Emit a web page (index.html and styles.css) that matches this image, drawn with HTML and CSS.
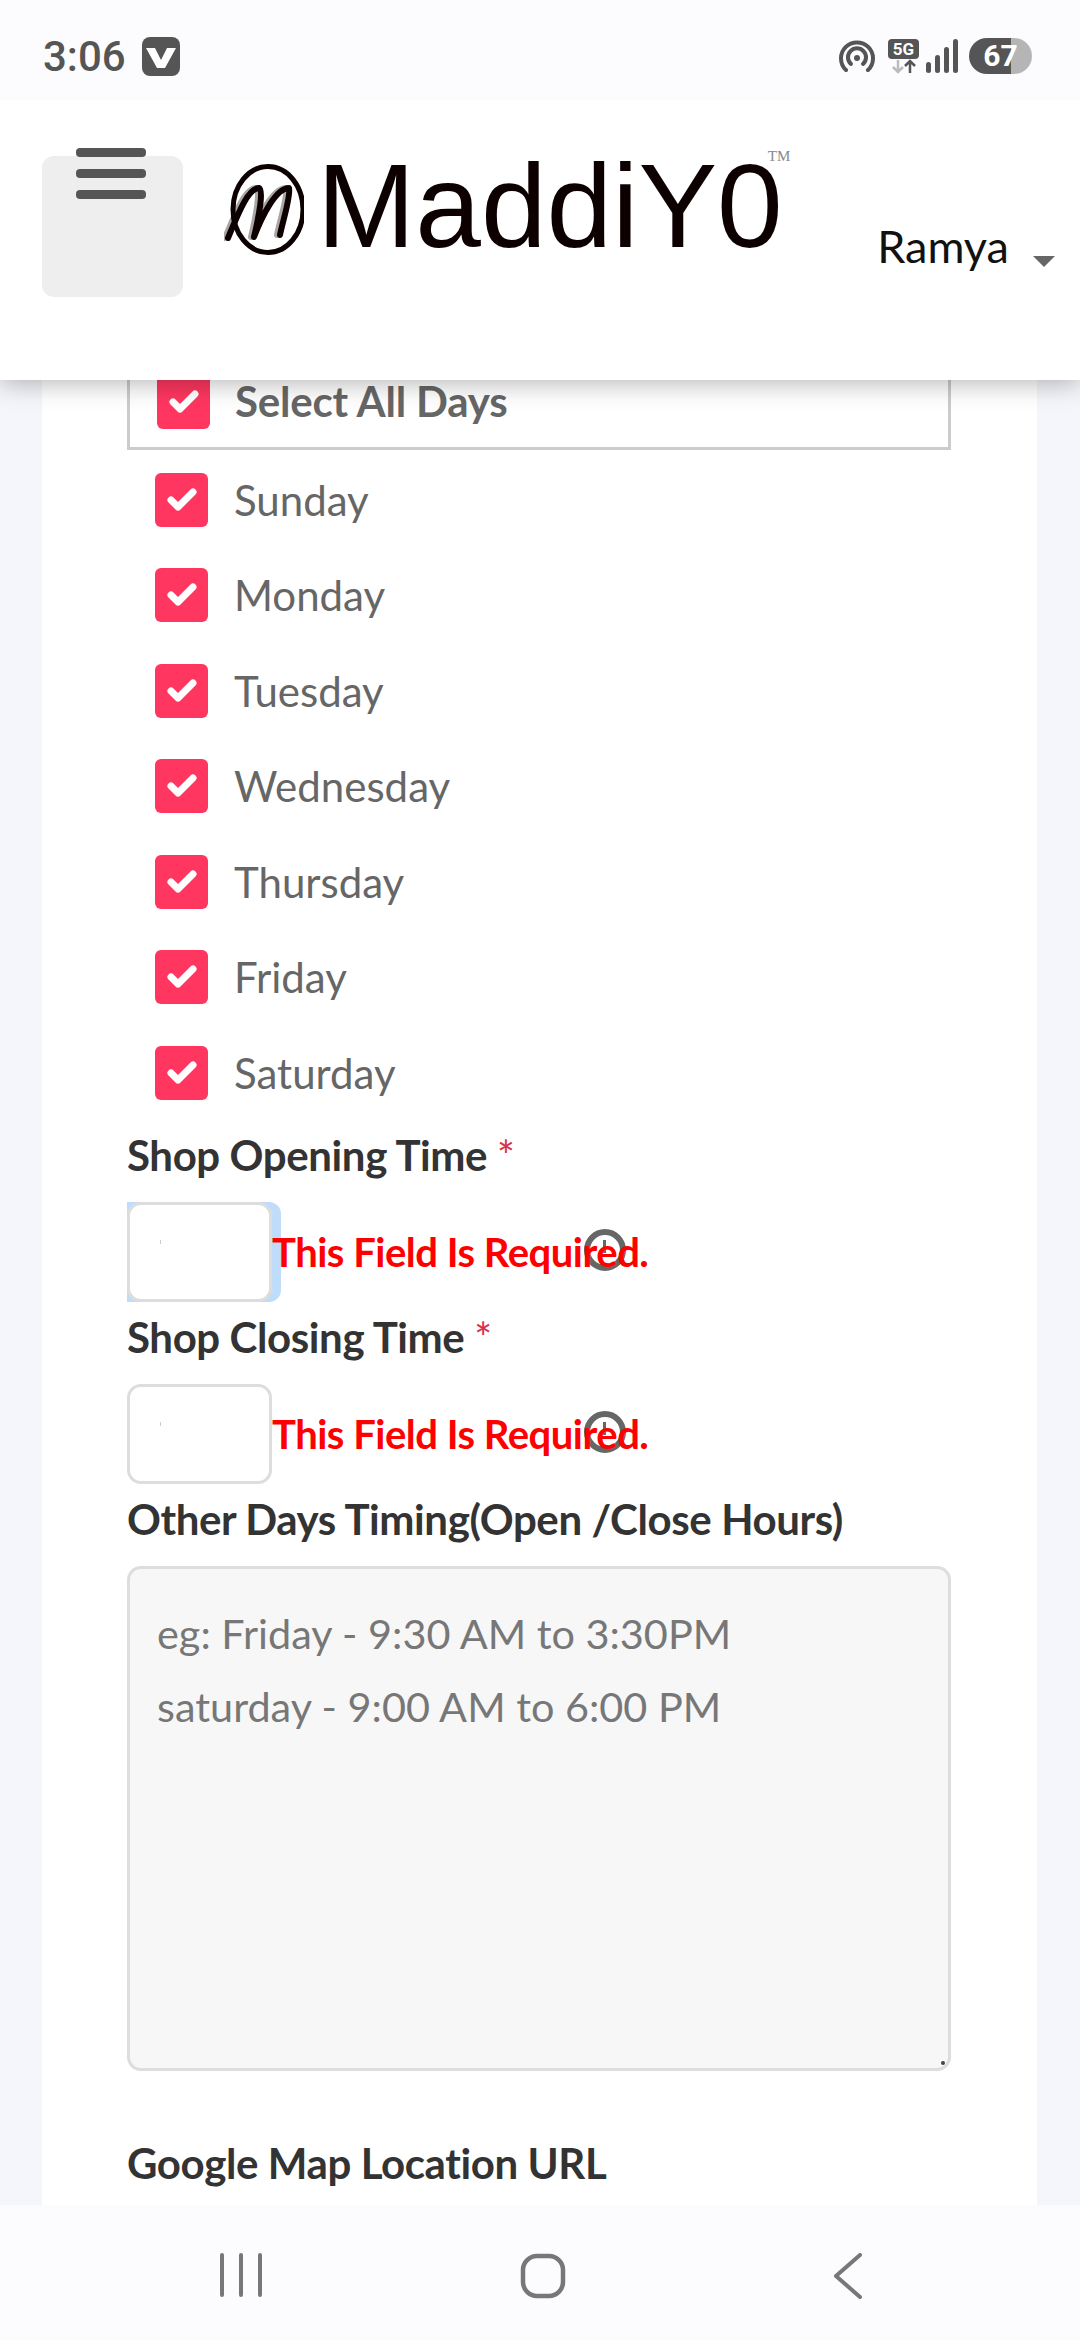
FILE: index.html
```html
<!DOCTYPE html>
<html lang="en">
<head>
    <meta charset="UTF-8">
    <meta name="viewport" content="width=device-width, initial-scale=1.0">
    <title>MaddiY0</title>
    <link rel="stylesheet" href="styles.css">
</head>
<body>
    <svg class="defs" width="0" height="0">
        <symbol id="tick" viewBox="0 0 30 24">
            <path d="M4 12l7 7L26 4" fill="none" stroke="#fff" stroke-width="7" stroke-linecap="round" stroke-linejoin="round"/>
        </symbol>
    </svg>

    <div class="status-bar">
        <div class="status-left">
            <span class="clock">3:06</span>
            <svg class="app-icon" width="38" height="39" viewBox="0 0 38 39">
                <rect width="38" height="39" rx="8" fill="#555"/>
                <path d="M4 11h9l6 12 6-12h9l-11 20h-8z" fill="#fff"/>
            </svg>
        </div>
        <div class="status-right">
            <svg width="36" height="32" viewBox="0 0 36 32">
                <path d="M7 30a16 16 0 1 1 22 0" fill="none" stroke="#555" stroke-width="4" stroke-linecap="round"/>
                <path d="M12 24a9 9 0 1 1 12 0" fill="none" stroke="#555" stroke-width="4" stroke-linecap="round"/>
                <circle cx="18" cy="18" r="3" fill="#555"/>
            </svg>
            <div class="net-icon">
                <span class="net-label">5G</span>
                <svg width="24" height="15" viewBox="0 0 24 15">
                    <path d="M6 1v12M1 8l5 5 5-5" fill="none" stroke="#bbb" stroke-width="2.5"/>
                    <path d="M18 14V2M13 7l5-5 5 5" fill="none" stroke="#555" stroke-width="2.5"/>
                </svg>
            </div>
            <svg class="signal" width="32" height="34" viewBox="0 0 32 34">
                <rect x="0" y="23" width="5" height="11" rx="2.5" fill="#555"/>
                <rect x="9" y="16" width="5" height="18" rx="2.5" fill="#555"/>
                <rect x="18" y="8" width="5" height="26" rx="2.5" fill="#555"/>
                <rect x="27" y="0" width="5" height="34" rx="2.5" fill="#555"/>
            </svg>
            <div class="battery">67</div>
        </div>
    </div>

    <header class="site-header">
        <button class="menu-btn">
            <span class="menu-bar"></span>
            <span class="menu-bar"></span>
            <span class="menu-bar"></span>
        </button>
        <div class="logo">
            <svg class="logo-mark" width="80" height="92" viewBox="0 0 80 92">
                <ellipse cx="44" cy="45.5" rx="35" ry="43" fill="none" stroke="#0d0000" stroke-width="5"/>
                <path d="M1 74C11 50 21 24 32 24c5 1 0 28-5 49C35 52 49 24 62 24c2 8-6 32-9 47" fill="none" stroke="#0d0000" stroke-opacity=".35" stroke-width="6" stroke-linecap="round" stroke-linejoin="round"/>
                <path d="M4 74C14 50 24 24 35 24c5 1 0 28-5 49C38 52 52 24 65 24c2 8-6 32-9 47" fill="none" stroke="#0d0000" stroke-width="6" stroke-linecap="round" stroke-linejoin="round"/>
            </svg>
            <span class="logo-text">MaddiY0</span>
            <span class="logo-tm">TM</span>
        </div>
        <div class="user-menu">
            <span class="user-name">Ramya</span>
            <span class="caret"></span>
        </div>
    </header>

    <main class="page">
        <form class="card">
            <div class="select-all">
                <span class="check"><svg width="30" height="24"><use href="#tick"/></svg></span>
                <span class="select-all-text">Select All Days</span>
            </div>

            <ul class="day-list">
                <li class="day"><span class="check"><svg width="30" height="24"><use href="#tick"/></svg></span>Sunday</li>
                <li class="day"><span class="check"><svg width="30" height="24"><use href="#tick"/></svg></span>Monday</li>
                <li class="day"><span class="check"><svg width="30" height="24"><use href="#tick"/></svg></span>Tuesday</li>
                <li class="day"><span class="check"><svg width="30" height="24"><use href="#tick"/></svg></span>Wednesday</li>
                <li class="day"><span class="check"><svg width="30" height="24"><use href="#tick"/></svg></span>Thursday</li>
                <li class="day"><span class="check"><svg width="30" height="24"><use href="#tick"/></svg></span>Friday</li>
                <li class="day"><span class="check"><svg width="30" height="24"><use href="#tick"/></svg></span>Saturday</li>
            </ul>

            <label class="field-label">Shop Opening Time <span class="required">*</span></label>
            <div class="time-row">
                <div class="time-focus"><div class="time-input"><span class="time-cursor"></span></div></div>
                <span class="field-error">This Field Is Required.</span>
                <span class="clock-icon"></span>
            </div>

            <label class="field-label">Shop Closing Time <span class="required">*</span></label>
            <div class="time-row">
                <div class="time-input"><span class="time-cursor"></span></div>
                <span class="field-error">This Field Is Required.</span>
                <span class="clock-icon"></span>
            </div>

            <label class="field-label">Other Days Timing(Open /Close Hours)</label>
            <div class="timing-wrap">
                <textarea class="timing-box" placeholder="eg: Friday - 9:30 AM to 3:30PM&#10;saturday - 9:00 AM to 6:00 PM"></textarea>
            </div>

            <label class="field-label map-label">Google Map Location URL</label>
        </form>
    </main>

    <nav class="nav-bar">
        <svg width="46" height="44" viewBox="0 0 46 44">
            <path d="M4 2v40M23 2v40M42 2v40" stroke="#777" stroke-width="4" stroke-linecap="round"/>
        </svg>
        <svg class="nav-home" width="46" height="46" viewBox="0 0 46 46">
            <rect x="3" y="3" width="40" height="40" rx="14" fill="none" stroke="#777" stroke-width="4.5"/>
        </svg>
        <svg class="nav-back" width="30" height="46" viewBox="0 0 30 46">
            <path d="M27 2L3 23l24 21" fill="none" stroke="#777" stroke-width="4" stroke-linecap="round" stroke-linejoin="round"/>
        </svg>
    </nav>
</body>
</html>
```

FILE: styles.css
```css
* {
    box-sizing: border-box;
}
html, body {
    height: 100%;
}
body {
    margin: 0;
    height: 2340px;
    overflow: hidden;
    display: flex;
    flex-direction: column;
    background-color: #f5f6fb;
    font-family: Lato, "Noto Sans", sans-serif;
}
.defs {
    display: block;
    height: 0;
}

/* status bar */
.status-bar {
    height: 100px;
    flex: none;
    position: relative;
    z-index: 3;
    display: flex;
    justify-content: space-between;
    align-items: center;
    padding: 12px 48px 0 43px;
    background-color: #fcfcff;
    color: #555;
}
.status-left {
    display: flex;
    align-items: center;
    gap: 16px;
}
.clock {
    font-family: Roboto, sans-serif;
    font-size: 42px;
    font-weight: 500;
}
.status-right {
    display: flex;
    align-items: center;
}
.net-icon {
    display: flex;
    flex-direction: column;
    align-items: center;
    margin-left: 13px;
    width: 31px;
}
.net-label {
    width: 31px;
    height: 20px;
    line-height: 20px;
    border-radius: 4px;
    background-color: #555;
    color: #fff;
    font-family: Roboto, sans-serif;
    font-size: 17px;
    font-weight: 700;
    text-align: center;
}
.signal {
    margin-left: 7px;
}
.battery {
    width: 63px;
    height: 36px;
    margin-left: 11px;
    border-radius: 18px;
    background: linear-gradient(to right, #555 42px, #b5b5b5 42px);
    color: #fff;
    font-family: Roboto, sans-serif;
    font-size: 30px;
    font-weight: 700;
    line-height: 36px;
    text-align: center;
}

/* header */
.site-header {
    height: 280px;
    flex: none;
    position: relative;
    z-index: 2;
    display: flex;
    align-items: flex-start;
    padding: 48px 25px 0 42px;
    background-color: #fff;
    box-shadow: 0 4px 24px rgba(0, 0, 0, .28);
}
.menu-btn {
    width: 141px;
    height: 141px;
    margin-top: 8px;
    padding: 0 0 0 34px;
    border: none;
    border-radius: 12px;
    background-color: #eee;
    display: flex;
    flex-direction: column;
    gap: 12px;
    flex: none;
}
.menu-bar {
    display: block;
    width: 70px;
    height: 9px;
    border-radius: 4px;
    background-color: #555;
}
.menu-bar:first-child {
    margin-top: -8px;
}
.logo {
    display: flex;
    align-items: flex-start;
    margin-left: 41px;
    width: 661px;
    height: 120px;
    color: #0d0000;
}
.logo-mark {
    flex: none;
    margin-top: 16px;
}
.logo-text {
    margin: 13px 0 0 13px;
    font-family: "Liberation Sans", Arial, sans-serif;
    font-size: 118px;
    line-height: 90px;
}
.logo-tm {
    margin: 1px 0 0 -15px;
    font-family: "Liberation Serif", serif;
    font-size: 15px;
    line-height: 14px;
    color: #888;
}
.user-menu {
    display: flex;
    align-items: center;
    margin-top: 72px;
    color: #111;
}
.user-name {
    font-size: 45px;
    line-height: 52px;
}
.caret {
    width: 0;
    height: 0;
    margin: 31px 0 0 24px;
    border-left: 11px solid transparent;
    border-right: 11px solid transparent;
    border-top: 11px solid #666;
}

/* form */
.page {
    flex: 1;
    min-height: 0;
    overflow: hidden;
    padding: 0 43px 0 42px;
}
.card {
    height: 100%;
    padding: 0 86px 0 85px;
    background-color: #fff;
}
.select-all {
    height: 70px;
    display: flex;
    align-items: flex-end;
    padding: 0 0 18px 27px;
    border: 3px solid #ccc;
    border-top: none;
    color: #666;
}
.select-all-text {
    margin: 0 0 8px 25px;
    font-size: 42px;
    font-weight: 700;
    line-height: 40px;
    letter-spacing: -.2px;
}
.check {
    flex: none;
    width: 53px;
    height: 54px;
    display: flex;
    align-items: center;
    justify-content: center;
    border-radius: 6px;
    background-color: #ff3660;
}
.day-list {
    list-style: none;
    margin: 2px 0 -.5px;
    padding: 0 0 0 28px;
}
.day {
    height: 95.5px;
    display: flex;
    align-items: center;
    gap: 26px;
    font-size: 42px;
    color: #666;
}
.field-label {
    display: block;
    height: 82px;
    font-size: 42px;
    font-weight: 700;
    line-height: 70px;
    letter-spacing: -.4px;
    color: #333;
}
.required {
    font-weight: 400;
    color: #d9304a;
}
.time-row {
    position: relative;
    height: 100px;
    display: flex;
    align-items: center;
}
.time-focus {
    width: 154px;
    height: 100px;
    margin-right: -9px;
    flex: none;
    background-color: #bfdcfb;
    border-radius: 0 12px 12px 0;
}
.time-input {
    flex: none;
    width: 145px;
    height: 100px;
    padding: 35px 0 0 30px;
    background-color: #fff;
    border: 3px solid #ddd;
    border-radius: 14px;
}
.time-cursor {
    display: block;
    width: 1px;
    height: 4px;
    background-color: #ccc;
}
.field-error {
    position: relative;
    z-index: 1;
    font-size: 40px;
    font-weight: 700;
    letter-spacing: -.5px;
    color: #f00;
}
.clock-icon {
    position: absolute;
    left: 457px;
    top: 27px;
    width: 42px;
    height: 42px;
    border: 6px solid #666;
    border-radius: 50%;
}
.clock-icon::after {
    content: "";
    position: absolute;
    left: 13px;
    top: 5px;
    width: 3px;
    height: 13px;
    background-color: #666;
}
.timing-wrap {
    position: relative;
    height: 505px;
}
.timing-wrap::after {
    content: "";
    position: absolute;
    right: 6px;
    bottom: 6px;
    width: 4px;
    height: 4px;
    border-radius: 50%;
    background-color: #444;
}
.timing-box {
    display: block;
    width: 100%;
    height: 100%;
    padding: 28px 27px;
    resize: none;
    background-color: #f7f7f7;
    border: 3px solid #ddd;
    border-radius: 14px;
    font-family: Lato, sans-serif;
    font-size: 41.4px;
    line-height: 73px;
    color: #555;
}
.timing-box::placeholder {
    color: #777;
    opacity: 1;
}
.map-label {
    margin-top: 57px;
}

/* bottom nav */
.nav-bar {
    height: 135px;
    flex: none;
    position: relative;
    z-index: 2;
    display: flex;
    align-items: flex-start;
    padding: 48px 0 0 218px;
    background-color: #fcfcff;
}
.nav-home {
    margin-left: 256px;
}
.nav-back {
    margin-left: 267px;
}
```
